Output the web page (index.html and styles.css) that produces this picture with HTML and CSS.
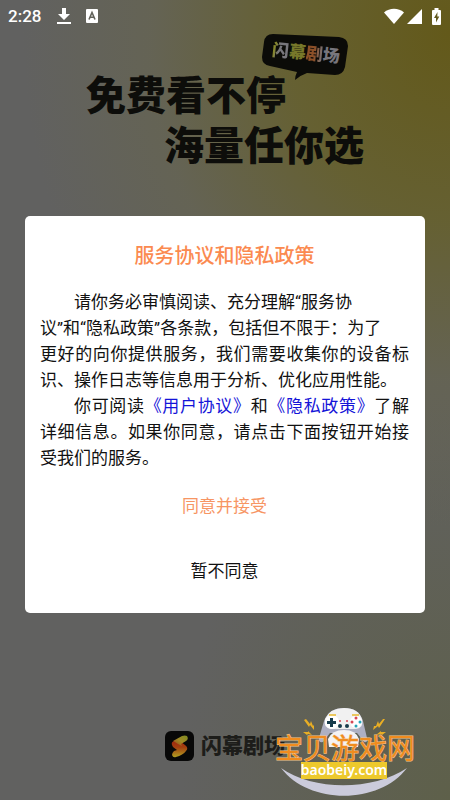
FILE: index.html
```html
<!DOCTYPE html>
<html lang="zh-CN">
<head>
  <meta charset="UTF-8">
  <meta name="viewport" content="width=device-width, initial-scale=1.0">
  <title>闪幕剧场</title>
  <link rel="stylesheet" href="styles.css">
</head>
<body>

  <header class="status-bar">
    <span class="time">2:28</span>
    <svg class="icon-download" width="14" height="18" viewBox="0 0 14 18" fill="#fff">
      <path d="M5 1h4v6h4l-6 6-6-6h4z"/>
      <path d="M0 15h14v2H0z"/>
    </svg>
    <svg class="icon-app" width="12" height="14" viewBox="0 0 12 14">
      <rect width="12" height="14" rx="1" fill="#fff"/>
      <path d="M3 10.500L6 3.500l3 7M4 8.300h4" fill="none" stroke="#62625a" stroke-width="1.600"/>
    </svg>
    <div class="status-right">
      <svg width="20" height="16" viewBox="0 0 20 16" fill="#fff">
        <path d="M0 4.500C5.500-.5 14.500-.5 20 4.500L10 16z"/>
      </svg>
      <svg width="15" height="15" viewBox="0 0 15 15" fill="#fff">
        <path d="M15 0v15H0z"/>
      </svg>
      <svg class="icon-battery" width="9" height="17" viewBox="0 0 9 17">
        <path d="M2.500 0h4v2H8a1 1 0 0 1 1 1v13a1 1 0 0 1-1 1H1a1 1 0 0 1-1-1V3a1 1 0 0 1 1-1h1.500z" fill="#fff"/>
        <path d="M5.500 4L2 10h2v4.500L7.300 8.500h-2z" fill="#635a20"/>
      </svg>
    </div>
  </header>

  <main class="splash">
    <section class="slogan">
      <p>免费看不停</p>
      <p class="second">海量任你选</p>
      <div class="bubble">
        <svg class="bubble-shape" width="88" height="48" viewBox="0 0 88 48" fill="#0b0b08">
          <path d="M12 1L78 4q9 1 9 9l-3 21q-2 8-10 8L46 40q-6 2-12 7 0-4 2-8L9 33q-8-1-8-9L3 9q1-8 9-8z"/>
        </svg>
        <span class="bubble-text"><i class="c1">闪</i><i class="c2">幕</i><i class="c3">剧</i><i class="c4">场</i></span>
      </div>
    </section>

    <section class="dialog" role="dialog" aria-labelledby="dialogTitle">
      <h2 id="dialogTitle">服务协议和隐私政策</h2>
      <div class="dialog-text">
        <p>请你务必审慎阅读、充分理解“服务协<br>议”和“隐私政策”各条款，包括但不限于：为了<br>更好的向你提供服务，我们需要收集你的设备标识、操作日志等信息用于分析、优化应用性能。</p>
        <p>你可阅读<a href="#">《用户协议》</a>和<a href="#">《隐私政策》</a>了解详细信息。如果你同意，请点击下面按钮开始接受我们的服务。</p>
      </div>
      <button type="button" class="btn-accept">同意并接受</button>
      <button type="button" class="btn-refuse">暂不同意</button>
    </section>
  </main>

  <footer class="brand">
    <svg width="29" height="30" viewBox="0 0 29 30">
      <defs>
        <linearGradient id="top" x1="1" y1="0" x2="0" y2="1">
          <stop offset="0" stop-color="#7d8a20"/>
          <stop offset=".5" stop-color="#a08a26"/>
          <stop offset="1" stop-color="#9a3c12"/>
        </linearGradient>
        <linearGradient id="bottom" x1="0" y1="0" x2="0" y2="1">
          <stop offset="0" stop-color="#a0260f"/>
          <stop offset=".4" stop-color="#a3400f"/>
          <stop offset="1" stop-color="#b0a022"/>
        </linearGradient>
      </defs>
      <rect width="29" height="30" rx="6" fill="#080808"/>
      <path d="M7 14q-1-3 2-4l7 1 4 3q4 3 1 6-3 4-10 6-3 1-4-2 0-2 2-4l3-1-4-3z" fill="url(#bottom)"/>
      <path d="M8 10l9-5q3-1 5 0 2 3-1 5l-5 3 1 2-4-2q-3-2-5-3z" fill="url(#top)"/>
    </svg>
    <span>闪幕剧场</span>
  </footer>

  <div class="site-mark">
    <svg width="142" height="90" viewBox="0 0 142 90">
      <path d="M7 60c32 23 92 23 126 0-28 37-98 37-126 0z" fill="#cbcbdb"/>
      <!-- gamepad -->
      <path d="M50 13q5-13 20-13t19 13l4 17q1 5-3 4l-7-9H56l-7 9q-5 1-4-4z" fill="#aeb0c2"/>
      <path d="M51 11q5-11 19-11t18 11q2 9-6 10H57q-8-1-6-10z" fill="#f1f1f1"/>
      <path d="M54 31q4-9 16-9t15 9l-1 8H55z" fill="#f4f3f4"/>
      <circle cx="58" cy="14" r="7" fill="#fff"/>
      <circle cx="82" cy="14" r="6" fill="#fff"/>
      <path d="M56 10h3v3h3v3h-3v3h-3v-3h-3v-3h3z" fill="#173c4c"/>
      <g fill="#173c4c"><circle cx="66" cy="18" r="2"/><circle cx="73" cy="18" r="2"/></g>
      <g fill="#d64755"><circle cx="82" cy="10" r="1.500"/><circle cx="78" cy="14" r="1.500"/><circle cx="66" cy="13" r="1"/><circle cx="73" cy="13" r="1"/></g>
      <g fill="#25a4b8"><circle cx="86" cy="14" r="1.500"/><circle cx="82" cy="18" r="1.500"/></g>
      <path d="M55 7h7M78 7h7" stroke="#e8b92d" stroke-width="1.500"/>
      <!-- sparks -->
      <g fill="#e9ae24">
        <path d="M30 12l2-1 4 5 1-3 2 5 1-1 0 5-4-5-1 2z"/>
        <path d="M29 24l5 0 0-1 4 4-4-1-1 1z"/>
        <path d="M111 11l-2 0-4 5-1-3-2 5-2 0-1 4 5-4 1 2z"/>
        <path d="M112 24l-5 0 0-1-5 4 5-1 1 1z"/>
      </g>
      <rect x="27" y="54" width="86" height="17" fill="#edc92c"/>
      <text class="mark-name" x="1" y="51">宝贝游戏网</text>
      <text class="mark-url" x="70" y="67">baobeiy.com</text>
    </svg>
  </div>

</body>
</html>
```
FILE: styles.css
```css
* {
  box-sizing: border-box;
}

body {
  font-family: Roboto, 'Noto Sans CJK SC', sans-serif;
  margin: 0;
  min-height: 100vh;
  display: flex;
  flex-direction: column;
  position: relative;
  color: #111;
  background-color: #616160;
  background-image:
    radial-gradient(ellipse 95% 62% at 100% 4%, #63591a 0%, rgba(102, 96, 42, 0.85) 38%, rgba(103, 101, 75, 0.55) 70%, rgba(99, 97, 90, 0) 100%),
    radial-gradient(ellipse 60% 50% at 100% 100%, #5e604a 0%, rgba(97, 97, 96, 0) 100%);
}

p, h2 {
  margin: 0;
}

/* Barra de estado */
.status-bar {
  display: flex;
  align-items: center;
  height: 32px;
  padding: 0 9px 0 8px;
  color: #fff;
}

.time {
  font-size: 17px;
  font-weight: 500;
}

.icon-download {
  margin-left: 16px;
}

.icon-app {
  margin-left: 15px;
}

.status-right {
  display: flex;
  align-items: center;
  gap: 3px;
  margin-left: auto;
}

.icon-battery {
  margin-left: 7px;
}

.splash {
  flex: 1;
}

.slogan {
  width: 278px;
  margin: 40px auto 0;
  position: relative;
  font-size: 40px;
  font-weight: 900;
  line-height: 50px;
  color: #0d0d0a;
}

.slogan .second {
  text-align: right;
}

.bubble {
  position: absolute;
  top: -39px;
  right: 15px;
  width: 88px;
  height: 48px;
}

.bubble-shape {
  display: block;
}

.bubble-text {
  position: absolute;
  top: 10px;
  left: 11px;
  font-size: 17px;
  line-height: 20px;
  transform: rotate(6deg);
}

.bubble-text i {
  font-style: normal;
  color: #77767c;
}

.bubble-text .c1 {
  background: linear-gradient(100deg, #85862c 20%, #77767c 40%);
  background-clip: text;
  color: transparent;
}

.bubble-text .c2 {
  color: #77782a;
}

.bubble-text .c3 {
  background: linear-gradient(90deg, #8c5028 50%, #77767c 100%);
  background-clip: text;
  color: transparent;
}

/* Ventana de consentimiento */
.dialog {
  margin: 44px 25px 0;
  padding: 25px 16px 22px 15px;
  display: flex;
  flex-direction: column;
  align-items: center;
  background: #fff;
  border-radius: 5px;
}

.dialog h2 {
  font-size: 20px;
  line-height: 30px;
  font-weight: 500;
  color: #fb8a50;
}

.dialog-text {
  width: 100%;
  margin-top: 18px;
  font-size: 17px;
  line-height: 26px;
  text-align: justify;
  text-spacing-trim: space-all;
}

.dialog-text p {
  text-indent: 2em;
}

.dialog-text a {
  color: #1414d8;
  text-decoration: none;
}

.dialog button {
  width: 100%;
  height: 44px;
  padding: 0;
  border: none;
  background: none;
  font-family: inherit;
  font-size: 17px;
  color: #111;
  cursor: pointer;
}

.dialog .btn-accept {
  margin-top: 11px;
  color: #f79563;
}

.dialog .btn-refuse {
  margin-top: 21px;
}

.brand {
  display: flex;
  justify-content: center;
  align-items: center;
  gap: 7px;
  padding-bottom: 39px;
  font-size: 21px;
  line-height: 30px;
  font-weight: 900;
  color: #1d1d1a;
}

.site-mark {
  position: absolute;
  right: 34px;
  bottom: 2px;
}

.site-mark svg {
  display: block;
}

.mark-name {
  font-size: 28px;
  font-weight: 400;
  fill: #f08c1e;
  stroke: #f3c48c;
  stroke-width: 1px;
  paint-order: stroke;
}

.mark-url {
  font-family: 'Noto Sans', sans-serif;
  font-size: 14px;
  font-weight: 600;
  fill: #fff;
  text-anchor: middle;
}
```
